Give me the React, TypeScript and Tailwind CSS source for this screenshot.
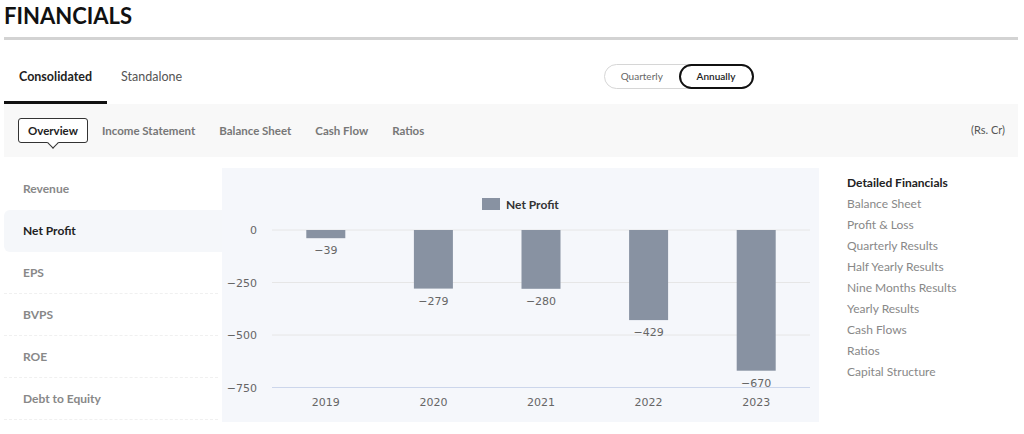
import React from "react";

type Bar = { year: string; value: number };

const bars: Bar[] = [
  { year: "2019", value: -39 },
  { year: "2020", value: -279 },
  { year: "2021", value: -280 },
  { year: "2022", value: -429 },
  { year: "2023", value: -670 },
];

const metrics = ["Revenue", "Net Profit", "EPS", "BVPS", "ROE", "Debt to Equity"];

const subTabs = ["Overview", "Income Statement", "Balance Sheet", "Cash Flow", "Ratios"];

const links = [
  "Balance Sheet",
  "Profit & Loss",
  "Quarterly Results",
  "Half Yearly Results",
  "Nine Months Results",
  "Yearly Results",
  "Cash Flows",
  "Ratios",
  "Capital Structure",
];

function NetProfitChart() {
  const zeroY = 62;
  const perUnit = 52.5 / 250;
  const ticks = [0, -250, -500, -750];
  const step = 107.6;

  return (
    <svg width="597" height="254" className="block" style={{ fontFamily: "'DejaVu Sans', sans-serif" }}>
      {/* legend */}
      <rect x="260" y="30" width="18" height="12" fill="#8892a2" />
      <text x="284" y="41" fontSize="12" fontWeight="700" fill="#333" style={{ fontFamily: "Lato, sans-serif" }}>
        Net Profit
      </text>

      {/* grid */}
      {ticks.map((t, i) => {
        const y = zeroY - t * perUnit;
        return (
          <g key={t}>
            <line
              x1="50"
              x2="588"
              y1={y}
              y2={y}
              stroke={i === ticks.length - 1 ? "#ccd6eb" : "#e6e6e6"}
              strokeWidth="1"
            />
            <text x="35" y={y + 4} fontSize="11" fill="#666" textAnchor="end">
              {t === 0 ? "0" : `−${Math.abs(t)}`}
            </text>
          </g>
        );
      })}

      {/* bars */}
      {bars.map((b, i) => {
        const cx = 50 + step * (i + 0.5);
        const h = Math.abs(b.value) * perUnit;
        return (
          <g key={b.year}>
            <rect x={cx - 19.5} y={zeroY} width="39" height={h} fill="#8892a2" />
            <text x={cx} y={zeroY + h + 16} fontSize="11" fill="#666" textAnchor="middle">
              {`−${Math.abs(b.value)}`}
            </text>
            <text x={cx} y="238" fontSize="11" fill="#666" textAnchor="middle">
              {b.year}
            </text>
          </g>
        );
      })}
    </svg>
  );
}

export default function App() {
  return (
    <div className="w-[1024px] h-[434px] bg-white overflow-hidden font-['Lato',sans-serif]">
      <div className="ml-1 w-[1014px]">
        {/* Title */}
        <h1 className="text-[22px] font-bold leading-none text-[#111] pt-[5px] h-[37px]">FINANCIALS</h1>
        <div className="h-[3px] bg-[#d3d3d3]" />

        {/* Consolidated / Standalone + toggle */}
        <div className="relative flex h-[64px] items-end">
          <div className="flex">
            <div className="px-[15px] pb-[14px] border-b-[3px] border-[#111] text-[12.5px] font-bold text-[#222]">
              Consolidated
            </div>
            <div className="px-[14px] pb-[14px] border-b-[3px] border-transparent text-[12.5px] text-[#555]">
              Standalone
            </div>
          </div>
          <div className="absolute left-[600px] top-[24px] flex h-[25px] w-[149px] items-center rounded-full border-[1.5px] border-[#d6d6d6]">
            <div className="flex-1 text-center text-[10px] text-[#666]">Quarterly</div>
            <div className="flex h-[25px] w-[75px] items-center justify-center rounded-full border-2 border-[#111] text-[10px] font-semibold text-[#222] -mr-[1.5px]">
              Annually
            </div>
          </div>
        </div>

        {/* Sub tabs */}
        <div className="flex h-[53px] items-center bg-[#f8f8f8] pl-[14px] pr-[13px]">
          <div className="flex gap-[4px]">
            {subTabs.map((t, i) =>
              i === 0 ? (
                <div
                  key={t}
                  className="relative rounded-[3px] border border-[#333] bg-white px-[9px] py-[3px] text-[11.5px] font-bold text-[#222]"
                >
                  {t}
                  <span className="absolute left-1/2 -bottom-[5px] h-[8px] w-[8px] -translate-x-1/2 rotate-45 border-b border-r border-[#333] bg-white" />
                </div>
              ) : (
                <div key={t} className="px-[10px] py-[4px] text-[11.5px] font-bold text-[#777]">
                  {t}
                </div>
              )
            )}
          </div>
          <div className="ml-auto text-[11px] text-[#555]">(Rs. Cr)</div>
        </div>

        {/* Body */}
        <div className="mt-[11px] flex">
          <div className="w-[218px]">
            {metrics.map((m, i) => (
              <div
                key={m}
                className={
                  i === 1
                    ? "flex h-[42px] items-center rounded-l-md bg-[#f5f7fa] pl-[19px] text-[12px] font-bold text-[#222]"
                    : i === 0
                    ? "flex h-[42px] items-center pl-[19px] text-[12px] font-bold text-[#888] mr-[4px]"
                    : "flex h-[42px] items-center border-b border-dashed border-[#f0f0f0] pl-[19px] text-[12px] font-bold text-[#888] mr-[4px]"
                }
              >
                {m}
              </div>
            ))}
          </div>
          <div className="h-[254px] w-[597px] bg-[#f5f7fb]">
            <NetProfitChart />
          </div>
          <div className="pl-[28px] pt-[6px]">
            <div className="h-[21px] text-[12px] font-bold text-[#222]">Detailed Financials</div>
            {links.map((l) => (
              <div key={l} className="h-[21px] text-[12px] text-[#888]">
                {l}
              </div>
            ))}
          </div>
        </div>
      </div>
    </div>
  );
}
